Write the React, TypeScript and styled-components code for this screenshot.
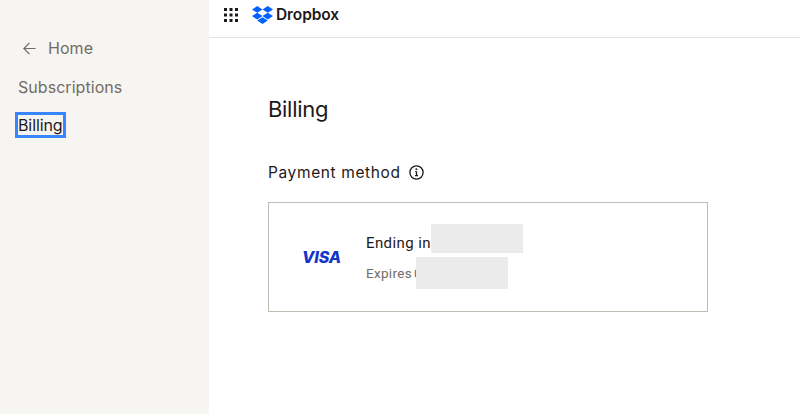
import styled, { createGlobalStyle } from "styled-components";

const GlobalStyle = createGlobalStyle`
  html, body {
    margin: 0;
    padding: 0;
    background: #fff;
    overflow: hidden;
  }
  body {
    font-family: "Inter", "Liberation Sans", sans-serif;
    color: #1e1919;
  }
`;

const Page = styled.div`
  display: flex;
  width: 800px;
  height: 414px;
`;

const Sidebar = styled.nav`
  width: 209px;
  flex: none;
  background: #f7f5f2;
  display: flex;
  flex-direction: column;
  align-items: flex-start;
  padding: 38px 0 0 18px;
  box-sizing: border-box;
`;

const NavItem = styled.a<{ $active?: boolean }>`
  display: flex;
  align-items: center;
  height: 20px;
  margin-bottom: 18.5px;
  font-size: 16px;
  line-height: 20px;
  letter-spacing: ${(p) => (p.$active ? "-0.1px" : "0.05px")};
  color: ${(p) => (p.$active ? "#1e1919" : "#736c64")};
  ${(p) => p.$active && "outline: 3px solid #3984ff;"}
`;

const BackIcon = styled.svg`
  width: 13px;
  height: 13px;
  margin: 0 12px 0 5px;
`;

const Main = styled.main`
  flex: 1;
  min-width: 0;
  display: flex;
  flex-direction: column;
`;

const TopBar = styled.header`
  height: 38px;
  flex: none;
  box-sizing: border-box;
  border-bottom: 1px solid #e3e3e1;
  display: flex;
  align-items: flex-start;
  padding: 6px 0 0 15px;
`;

const AppsIcon = styled.svg`
  width: 14px;
  height: 14px;
  margin: 2px 14px 0 0;
`;

const LogoGlyph = styled.svg`
  width: 21px;
  height: 18px;
  margin-right: 3px;
`;

const Wordmark = styled.span`
  font-size: 15.5px;
  font-weight: 600;
  line-height: 17px;
  letter-spacing: -0.1px;
`;

const Content = styled.div`
  padding: 57px 92px 0 59px;
`;

const Title = styled.h1`
  margin: 0 0 39px;
  font-size: 22px;
  line-height: 28px;
  font-weight: 400;
  letter-spacing: -0.3px;
`;

const SectionHead = styled.div`
  display: flex;
  align-items: center;
  height: 20px;
  margin-bottom: 20px;
  font-size: 15.5px;
  letter-spacing: 0.62px;
`;

const InfoIcon = styled.svg`
  width: 15px;
  height: 15px;
  margin-left: 8px;
`;

const Card = styled.div`
  height: 110px;
  box-sizing: border-box;
  border: 1px solid #c1bbb4;
  display: flex;
  align-items: center;
`;

const Visa = styled.span`
  width: 97px;
  padding-left: 33px;
  box-sizing: border-box;
  flex: none;
  font-size: 16px;
  font-weight: 800;
  font-style: italic;
  letter-spacing: -0.1px;
  color: #1434cb;
`;

const Details = styled.div`
  display: flex;
  flex-direction: column;
  margin-bottom: 1px;
`;

const Line = styled.div<{ $muted?: boolean }>`
  display: flex;
  align-items: center;
  white-space: pre;
  font-family: "Roboto", "Liberation Sans", sans-serif;
  font-size: ${(p) => (p.$muted ? "13.5px" : "15px")};
  letter-spacing: ${(p) => (p.$muted ? "0.3px" : "0.4px")};
  word-spacing: ${(p) => (p.$muted ? "-1.5px" : "0")};
  color: ${(p) => (p.$muted ? "#736c64" : "#1e1919")};
  margin-top: ${(p) => (p.$muted ? "-5px" : "0")};
`;

const Redacted = styled.span<{ $h: number; $lap: number; $drop: number }>`
  width: 92px;
  height: ${(p) => p.$h}px;
  margin-left: ${(p) => p.$lap}px;
  margin-bottom: ${(p) => p.$drop}px;
  background: #ebebeb;
`;

export default function App() {
  return (
    <Page>
      <GlobalStyle />
      <Sidebar>
        <NavItem>
          <BackIcon viewBox="0 0 15 15" fill="none" stroke="#736c64" strokeWidth="1.4">
            <path d="M14.5 7.5H1M7.5 1L1 7.5l6.5 6.5" />
          </BackIcon>
          Home
        </NavItem>
        <NavItem>Subscriptions</NavItem>
        <NavItem $active>Billing</NavItem>
      </Sidebar>
      <Main>
        <TopBar>
          <AppsIcon viewBox="0 0 14 14" fill="#1e1919">
            {[0, 5.5, 11].flatMap((y) =>
              [0, 5.5, 11].map((x) => <rect key={`${x}-${y}`} x={x} y={y} width="3" height="3" />)
            )}
          </AppsIcon>
          <LogoGlyph viewBox="0 0 235.45 200" fill="#0061fe">
            <path d="M58.86 0L0 37.5 58.86 75l58.87-37.5zM176.59 0l-58.86 37.5L176.59 75l58.86-37.5zM0 112.5L58.86 150l58.87-37.5L58.86 75zM176.59 75l-58.86 37.5 58.86 37.5 58.86-37.5zM58.86 162.5l58.87 37.5 58.86-37.5L117.73 125z" />
          </LogoGlyph>
          <Wordmark>Dropbox</Wordmark>
        </TopBar>
        <Content>
          <Title>Billing</Title>
          <SectionHead>
            Payment method
            <InfoIcon viewBox="0 0 15 15" fill="none" stroke="#1e1919" strokeWidth="1.3">
              <circle cx="7.5" cy="7.5" r="6.6" />
              <path d="M7.5 6.5v4M6 10.7h3M6.3 6.6h1.2" />
              <circle cx="7.4" cy="4.3" r="0.4" />
            </InfoIcon>
          </SectionHead>
          <Card>
            <Visa>VISA</Visa>
            <Details>
              <Line>
                Ending in
                <Redacted $h={29} $lap={0} $drop={9} />
              </Line>
              <Line $muted>
                Expires 0
                <Redacted $h={32} $lap={-5.5} $drop={0} />
              </Line>
            </Details>
          </Card>
        </Content>
      </Main>
    </Page>
  );
}
